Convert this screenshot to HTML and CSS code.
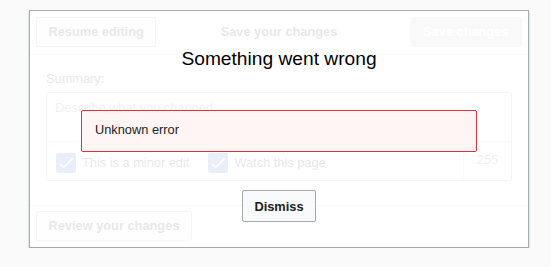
FILE: index.html
```html
<!DOCTYPE html>
<html>
<head>
<meta charset="utf-8">
<link rel="stylesheet" href="styles.css">
</head>
<body>
<div class="dialog">
  <div class="content">
    <div class="head">
      <button class="btn">Resume editing</button>
      <div class="head-title">Save your changes</div>
      <button class="btn btn-primary">Save changes</button>
    </div>
    <div class="body">
      <div class="label">Summary:</div>
      <div class="summary">
        <div class="textarea">Describe what you changed</div>
        <div class="opts">
          <div class="opt">
            <span class="check"><svg viewBox="0 0 20 20" width="20" height="20"><path d="M7 14.17L2.83 10l-1.41 1.41L7 17 19 5l-1.41-1.42z" fill="#fff"/></svg></span>
            <span>This is a minor edit</span>
          </div>
          <div class="opt">
            <span class="check"><svg viewBox="0 0 20 20" width="20" height="20"><path d="M7 14.17L2.83 10l-1.41 1.41L7 17 19 5l-1.41-1.42z" fill="#fff"/></svg></span>
            <span>Watch this page</span>
          </div>
          <div class="count">255</div>
        </div>
      </div>
    </div>
    <div class="foot">
      <button class="btn">Review your changes</button>
    </div>
  </div>
  <div class="message">
    <div class="msg-title">Something went wrong</div>
    <div class="error">Unknown error</div>
    <button class="dismiss">Dismiss</button>
  </div>
</div>
</body>
</html>
```

FILE: styles.css
```css
html, body {
  margin: 0;
  padding: 0;
}
body {
  background: #fafafa;
  font-family: "Liberation Sans", Arial, sans-serif;
  font-size: 12.8px;
  line-height: 18px;
  color: #202122;
  padding: 10px 0 0 29px;
}
.dialog {
  position: relative;
  box-sizing: border-box;
  width: 500px;
  height: 238px;
  background: #fff;
  border: 1px solid #a2a9b1;
  box-shadow: 0 2px 2px 0 rgba(0, 0, 0, 0.25);
}
.content {
  opacity: 0.1;
}
.btn {
  box-sizing: border-box;
  height: 30px;
  padding: 0 11.5px;
  border: 1px solid #a2a9b1;
  border-radius: 2px;
  background: #f8f9fa;
  color: #202122;
  font-family: inherit;
  font-size: 12.8px;
  font-weight: bold;
  line-height: 28px;
}
.btn-primary {
  background: #c8ccd1;
  border-color: #c8ccd1;
  color: #fff;
  padding: 0 12.5px;
}
.head {
  padding: 6px 6px 7px;
  border-bottom: 1px solid #c8ccd1;
  display: grid;
  grid-template-columns: 1fr auto 1fr;
  align-items: center;
  height: 30px;
}
.head .btn:first-child {
  justify-self: start;
}
.head .btn-primary {
  justify-self: end;
}
.head-title {
  font-weight: bold;
}
.body {
  height: 150px;
  box-sizing: border-box;
  padding: 15px 16px 0;
}
.label {
  line-height: 18px;
}
.summary {
  margin-top: 4px;
  border: 1px solid #a2a9b1;
  border-radius: 2px;
}
.textarea {
  height: 49px;
  box-sizing: border-box;
  padding: 6px 8px;
  color: #72777d;
  border-bottom: 1px solid #c8ccd1;
}
.opts {
  height: 38px;
  display: flex;
  align-items: stretch;
}
.opt {
  display: flex;
  align-items: center;
  gap: 6px;
  padding: 3px 0 0 9px;
  margin-right: 10px;
}
.check {
  box-sizing: border-box;
  width: 20px;
  height: 20px;
  border: 1px solid #36c;
  border-radius: 2px;
  background: #36c;
  display: flex;
  align-items: center;
  justify-content: center;
}
.check svg {
  width: 16px;
  height: 16px;
}
.count {
  margin-left: auto;
  width: 48px;
  box-sizing: border-box;
  border-left: 1px solid #c8ccd1;
  text-align: center;
  padding-top: 9px;
  color: #72777d;
}
.foot {
  border-top: 1px solid #c8ccd1;
  padding: 5px 6px 6px;
}
.message {
  position: absolute;
  top: 0;
  left: 0;
  right: 0;
  bottom: 0;
  display: flex;
  flex-direction: column;
  align-items: center;
  padding-top: 36px;
}
.msg-title {
  font-size: 19.2px;
  line-height: 24px;
  color: #000;
}
.error {
  margin-top: 39px;
  box-sizing: border-box;
  width: 396px;
  height: 42px;
  padding: 10px 13px 12px;
  border: 1px solid #d33;
  border-radius: 2px;
  background: #fff5f5;
  color: #202122;
}
.dismiss {
  margin-top: 38px;
  box-sizing: border-box;
  height: 32px;
  padding: 0 11.5px;
  border: 1px solid #a2a9b1;
  border-radius: 2px;
  background: #f8f9fa;
  color: #202122;
  font-family: inherit;
  font-size: 12.8px;
  font-weight: bold;
}
```
